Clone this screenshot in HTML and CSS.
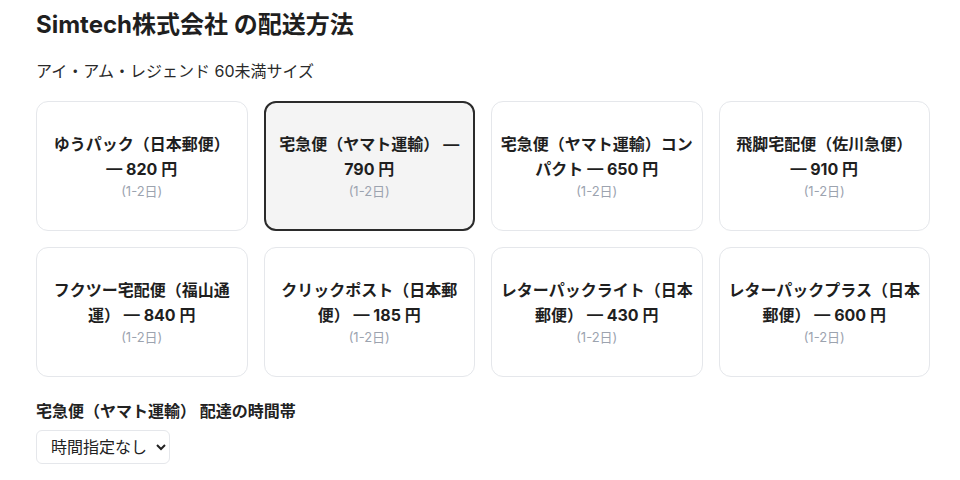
FILE: index.html
```html
<!DOCTYPE html>
<html lang="ja">
<head>
<meta charset="utf-8">
<link rel="stylesheet" href="styles.css">
</head>
<body>
<main class="page">
  <h1 class="title">Simtech株式会社 の配送方法</h1>
  <p class="subtitle">アイ・アム・レジェンド 60未満サイズ</p>
  <div class="grid">
    <div class="card"><div class="name">ゆうパック（日本郵便） — 820 円</div><div class="days">(1-2日)</div></div>
    <div class="card selected"><div class="name">宅急便（ヤマト運輸） — 790 円</div><div class="days">(1-2日)</div></div>
    <div class="card"><div class="name">宅急便（ヤマト運輸）コンパクト — 650 円</div><div class="days">(1-2日)</div></div>
    <div class="card"><div class="name">飛脚宅配便（佐川急便） — 910 円</div><div class="days">(1-2日)</div></div>
    <div class="card"><div class="name">フクツー宅配便（福山通運） — 840 円</div><div class="days">(1-2日)</div></div>
    <div class="card"><div class="name">クリックポスト（日本郵便） — 185 円</div><div class="days">(1-2日)</div></div>
    <div class="card"><div class="name">レターパックライト（日本郵便） — 430 円</div><div class="days">(1-2日)</div></div>
    <div class="card"><div class="name">レターパックプラス（日本郵便） — 600 円</div><div class="days">(1-2日)</div></div>
  </div>
  <label class="label" for="slot">宅急便（ヤマト運輸） 配達の時間帯</label>
  <select id="slot" class="select">
    <option>時間指定なし</option>
  </select>
</main>
</body>
</html>
```
FILE: styles.css
```css
html, body {
  margin: 0;
  padding: 0;
  background: #ffffff;
}
body {
  font-family: Inter, "Noto Sans CJK JP", sans-serif;
  color: #222222;
}
.page {
  width: 894px;
  padding: 7px 0 0 36px;
}
.title {
  margin: 0;
  font-size: 24px;
  line-height: 36px;
  font-weight: 700;
  color: #1f1f1f;
}
.subtitle {
  margin: 16px 0 18px;
  font-size: 16px;
  line-height: 24px;
  color: #2a2a2a;
}
.grid {
  display: grid;
  grid-template-columns: repeat(4, 1fr);
  gap: 16px 16px;
}
.card {
  box-sizing: border-box;
  height: 130px;
  border: 1px solid #e5e7eb;
  border-radius: 12px;
  display: flex;
  flex-direction: column;
  justify-content: center;
  align-items: center;
  text-align: center;
  padding: 0 7px;
  background: #ffffff;
}
.card.selected {
  border: 2px solid #2b2b2b;
  background: #f4f4f4;
}
.name {
  font-size: 16px;
  line-height: 25px;
  font-weight: 700;
  color: #1f1f1f;
}
.days {
  font-size: 13px;
  line-height: 18px;
  color: #9ca3af;
}
.label {
  display: block;
  margin: 23px 0 8px;
  font-size: 16px;
  line-height: 22px;
  font-weight: 700;
  color: #222222;
}
.select {
  font-family: Inter, "Noto Sans CJK JP", sans-serif;
  font-size: 16px;
  height: 34px;
  padding: 0 5px 0 10px;
  border: 1px solid #e5e7eb;
  border-radius: 6px;
  background: #ffffff;
  color: #222222;
}
```
